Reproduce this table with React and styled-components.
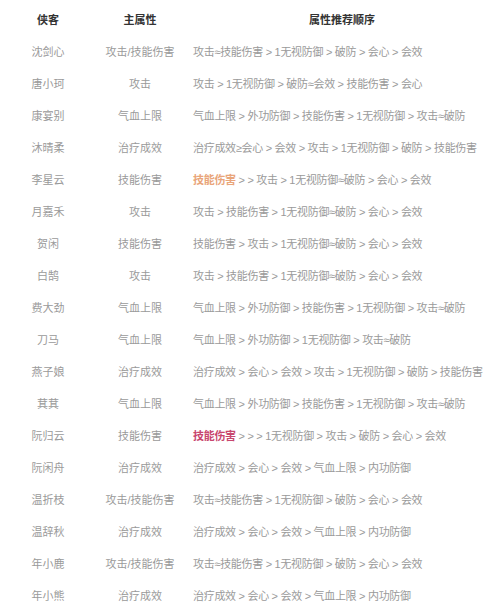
import React from 'react'
import styled, { createGlobalStyle } from 'styled-components'

const Global = createGlobalStyle`
  body {
    margin: 0;
    background: #fff;
    font-family: "Liberation Sans", "Noto Sans CJK SC", sans-serif;
  }
`

const Table = styled.div`
  width: 500px;
  padding-top: 3px;
  display: grid;
  grid-template-columns: 96px 88px 1fr;
  grid-auto-rows: 32px;
`

const Cell = styled.div`
  display: flex;
  align-items: center;
  justify-content: ${(p) => (p.left ? 'flex-start' : 'center')};
  padding-left: ${(p) => (p.left ? '9px' : '0')};
  font-size: 11px;
  letter-spacing: ${(p) => (p.left ? '-0.3px' : '0')};
  color: ${(p) => (p.head ? '#333' : '#9a9a9a')};
  font-weight: ${(p) => (p.head ? 700 : 400)};
  white-space: pre;
`

const Mark = styled.span`
  color: ${(p) => p.tone};
  font-weight: 700;
`

const rows = [
  ['沈剑心', '攻击/技能伤害', '攻击≈技能伤害 > 1无视防御 > 破防 > 会心 > 会效'],
  ['唐小珂', '攻击', '攻击 > 1无视防御 > 破防≈会效 > 技能伤害 > 会心'],
  ['康宴别', '气血上限', '气血上限 > 外功防御 > 技能伤害 > 1无视防御 > 攻击≈破防'],
  ['沐晴柔', '治疗成效', '治疗成效≥会心 > 会效 > 攻击 > 1无视防御 > 破防 > 技能伤害'],
  ['李星云', '技能伤害', ' > > 攻击 > 1无视防御≈破防 > 会心 > 会效', '#e9a57a'],
  ['月嘉禾', '攻击', '攻击 > 技能伤害 > 1无视防御≈破防 > 会心 > 会效'],
  ['贺闲', '技能伤害', '技能伤害 > 攻击 > 1无视防御≈破防 > 会心 > 会效'],
  ['白鹄', '攻击', '攻击 > 技能伤害 > 1无视防御≈破防 > 会心 > 会效'],
  ['费大劲', '气血上限', '气血上限 > 外功防御 > 技能伤害 > 1无视防御 > 攻击≈破防'],
  ['刀马', '气血上限', '气血上限 > 外功防御 > 1无视防御 > 攻击≈破防'],
  ['燕子娘', '治疗成效', '治疗成效 > 会心 > 会效 > 攻击 > 1无视防御 > 破防 > 技能伤害'],
  ['萁萁', '气血上限', '气血上限 > 外功防御 > 技能伤害 > 1无视防御 > 攻击≈破防'],
  ['阮归云', '技能伤害', ' > > > 1无视防御 > 攻击 > 破防 > 会心 > 会效', '#c8466e'],
  ['阮闲舟', '治疗成效', '治疗成效 > 会心 > 会效 > 气血上限 > 内功防御'],
  ['温折枝', '攻击/技能伤害', '攻击≈技能伤害 > 1无视防御 > 破防 > 会心 > 会效'],
  ['温辞秋', '治疗成效', '治疗成效 > 会心 > 会效 > 气血上限 > 内功防御'],
  ['年小鹿', '攻击/技能伤害', '攻击≈技能伤害 > 1无视防御 > 破防 > 会心 > 会效'],
  ['年小熊', '治疗成效', '治疗成效 > 会心 > 会效 > 气血上限 > 内功防御'],
]

export default function App() {
  return (
    <>
      <Global />
      <Table>
        <Cell head>侠客</Cell>
        <Cell head>主属性</Cell>
        <Cell head>属性推荐顺序</Cell>
        {rows.map(([name, main, order, tone]) => (
          <React.Fragment key={name}>
            <Cell>{name}</Cell>
            <Cell>{main}</Cell>
            <Cell left>
              {tone ? <Mark tone={tone}>技能伤害</Mark> : null}
              {order}
            </Cell>
          </React.Fragment>
        ))}
      </Table>
    </>
  )
}
